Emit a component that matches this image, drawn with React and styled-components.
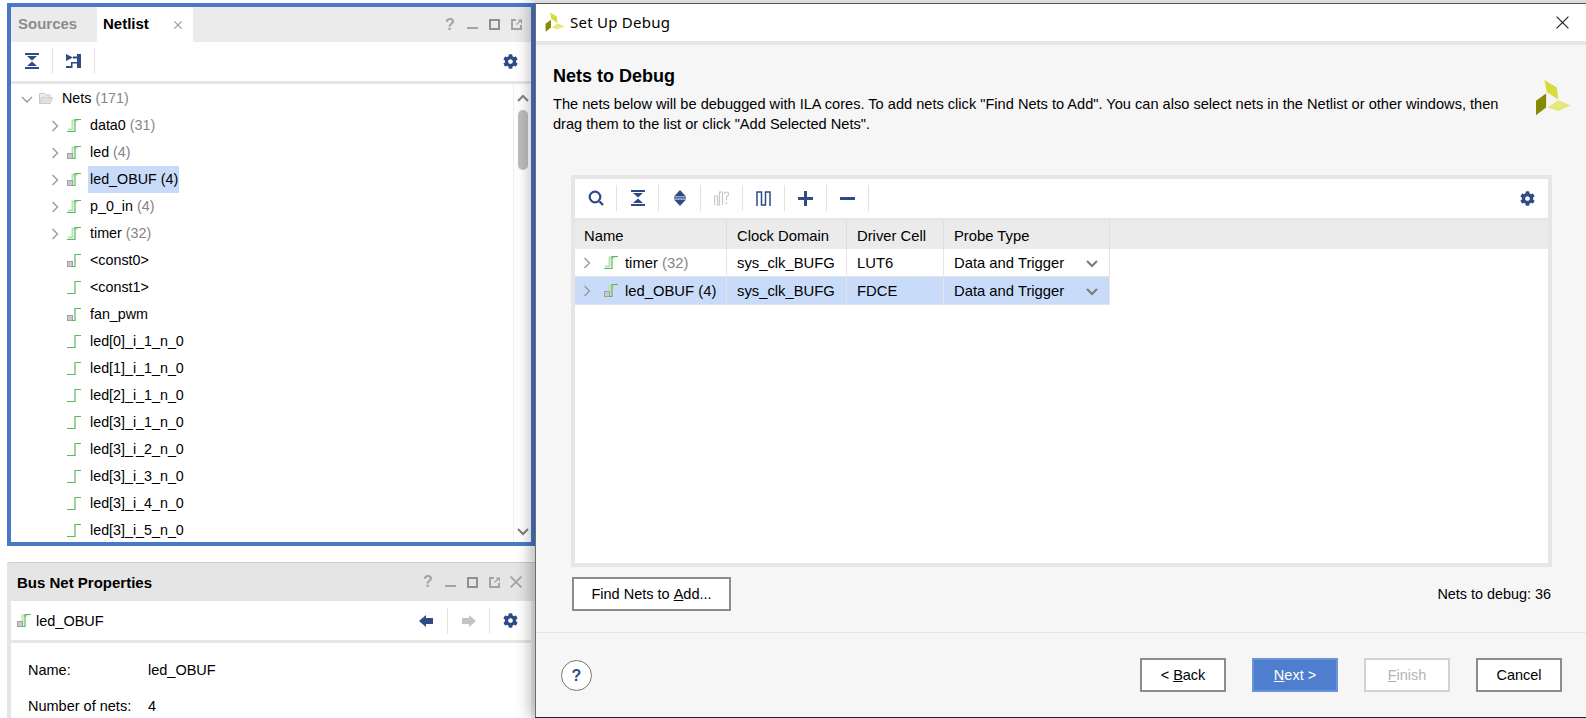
import React from 'react'
import styled, { createGlobalStyle } from 'styled-components'
import { FaCog } from 'react-icons/fa'

const GlobalStyle = createGlobalStyle`
  html, body {
    margin: 0;
    padding: 0;
    background: #fff;
  }
  * {
    box-sizing: border-box;
  }
`

const NAVY = '#2f4b85'
const BLUE = '#4a78c8'

const treeRows = [
  { name: 'data0', count: 31, kind: 'bus', open: true },
  { name: 'led', count: 4, kind: 'busBox', open: true },
  { name: 'led_OBUF', count: 4, kind: 'busBox', open: true, selected: true },
  { name: 'p_0_in', count: 4, kind: 'bus', open: true },
  { name: 'timer', count: 32, kind: 'bus', open: true },
  { name: '<const0>', kind: 'box' },
  { name: '<const1>', kind: 'single' },
  { name: 'fan_pwm', kind: 'box' },
  { name: 'led[0]_i_1_n_0', kind: 'single' },
  { name: 'led[1]_i_1_n_0', kind: 'single' },
  { name: 'led[2]_i_1_n_0', kind: 'single' },
  { name: 'led[3]_i_1_n_0', kind: 'single' },
  { name: 'led[3]_i_2_n_0', kind: 'single' },
  { name: 'led[3]_i_3_n_0', kind: 'single' },
  { name: 'led[3]_i_4_n_0', kind: 'single' },
  { name: 'led[3]_i_5_n_0', kind: 'single' },
]

const debugRows = [
  { name: 'timer', count: 32, kind: 'bus', domain: 'sys_clk_BUFG', cell: 'LUT6' },
  { name: 'led_OBUF', count: 4, kind: 'busBox', domain: 'sys_clk_BUFG', cell: 'FDCE', selected: true, dark: true },
]

const NetIcon = ({ kind }) => {
  const bus = kind === 'bus' || kind === 'busBox'
  const box = kind === 'box' || kind === 'busBox'
  return (
    <svg width="14" height="13" viewBox="0 0 14 13" fill="none">
      {bus && <path d="M1 10.5H5.5V1.5H11" stroke="#b9e2b9" strokeWidth="2" />}
      {box && <rect x="0.5" y="7.5" width="5" height="5" fill="#c9c9c9" stroke="#a0a0a0" />}
      <path d={box ? 'M5 12.5H8V0.5H14' : 'M0 12.5H8V0.5H14'} stroke="#5cb85c" strokeWidth="1.2" />
    </svg>
  )
}

const Chevron = ({ open, color = '#9a9a9a', weight = 1.4 }) => (
  <svg width="12" height="12" viewBox="0 0 12 12" fill="none">
    <path d={open ? 'M1 4L6 9L11 4' : 'M3.5 1L8.5 6L3.5 11'} stroke={color} strokeWidth={weight} />
  </svg>
)

const Folder = () => (
  <svg width="14" height="11" viewBox="0 0 14 11">
    <path d="M0.5 0.5H5.5L7 2H11V10.5H0.5Z" fill="#ececec" stroke="#c8c8c8" />
    <path d="M2.5 4.5H13.5L11 10.5H0.5Z" fill="#e0e0e0" stroke="#cccccc" />
  </svg>
)

const CollapseIcon = () => (
  <svg width="14" height="16" viewBox="0 0 14 16" fill={NAVY}>
    <rect width="14" height="2" />
    <path d="M2 3H12L7 7.4Z" />
    <path d="M7 8.6L12 13H2Z" />
    <rect y="14" width="14" height="2" />
  </svg>
)

const ExpandIcon = () => (
  <svg width="14" height="16" viewBox="0 0 14 16" fill={NAVY}>
    <path d="M7 0L13 6.5H1Z" />
    <rect x="1" y="7.2" width="12" height="1.4" />
    <path d="M1 9.5H13L7 16Z" />
  </svg>
)

const FlattenIcon = () => (
  <svg width="15" height="14" viewBox="0 0 15 14" fill={NAVY}>
    <path d="M0 0L7 3.5L0 7Z" />
    <rect x="7" y="2.5" width="4" height="2" />
    <rect x="11" width="4" height="14" />
    <path d="M0 12H5V8H11V9.5H6.5V14H0Z" />
  </svg>
)

const SearchIcon = () => (
  <svg width="16" height="16" viewBox="0 0 16 16" fill="none" stroke={NAVY}>
    <circle cx="7" cy="7" r="5.3" strokeWidth="2.2" />
    <path d="M11.5 11.5L15 15" strokeWidth="2.4" />
  </svg>
)

const SchematicIcon = () => (
  <svg width="15" height="15" viewBox="0 0 15 15" fill="none" stroke="#c6c6c6" strokeWidth="1.2">
    <path d="M0.5 14V5H3.5V14H5.5V1H8.5V14" />
    <path d="M10.5 3Q10.5 1 12.5 1T14.5 3T12.5 6V9M12.5 11V13" />
  </svg>
)

const WaveIcon = () => (
  <svg width="15" height="15" viewBox="0 0 15 15" fill="none" stroke={NAVY} strokeWidth="1.5">
    <path d="M1 15V1H5.5V14H9.5V1H14V15" />
  </svg>
)

const PlusIcon = () => (
  <svg width="15" height="15" viewBox="0 0 15 15" fill={NAVY}>
    <rect y="6" width="15" height="3" />
    <rect x="6" width="3" height="15" />
  </svg>
)

const MinusIcon = () => (
  <svg width="15" height="15" viewBox="0 0 15 15" fill={NAVY}>
    <rect y="6" width="15" height="3" />
  </svg>
)

const ArrowIcon = ({ right, color }) => (
  <svg width="14" height="12" viewBox="0 0 14 12" fill={color}>
    <path d={right ? 'M0 3H7V0L14 6L7 12V9H0Z' : 'M14 3H7V0L0 6L7 12V9H14Z'} />
  </svg>
)

const MinimizeIcon = () => (
  <svg width="11" height="11" viewBox="0 0 11 11" fill="#a3a3a3">
    <rect y="8" width="11" height="2" />
  </svg>
)

const MaximizeIcon = () => (
  <svg width="11" height="11" viewBox="0 0 11 11" fill="none" stroke="#8f8f8f" strokeWidth="2">
    <rect x="1" y="1" width="9" height="9" />
  </svg>
)

const FloatIcon = () => (
  <svg width="11" height="11" viewBox="0 0 11 11" fill="none" stroke="#a3a3a3">
    <path d="M5 1H1V10H10V6" strokeWidth="2" />
    <path d="M5.5 5.5L10 1M7 1H10.5V4.5" strokeWidth="1.2" />
  </svg>
)

const CloseIcon = ({ size = 12, color = '#a3a3a3', weight = 1.6 }) => (
  <svg width={size} height={size} viewBox="0 0 11 11" fill="none" stroke={color} strokeWidth={weight}>
    <path d="M0.5 0.5L10.5 10.5M10.5 0.5L0.5 10.5" />
  </svg>
)

const Logo = ({ size }) => (
  <svg width={size} height={size} viewBox="285 237 110 110">
    <path d="M313 240L350 262L354 298L320 276Z" fill="#d5dc3c" />
    <path d="M354 300L392 316L355 332L322 322Z" fill="#e3e97c" />
    <path d="M318 280V322L288 345V302Z" fill="#858a00" />
  </svg>
)

const WindowButtons = ({ closable }) => (
  <WindowControls>
    <HelpMark>?</HelpMark>
    <WindowButton><MinimizeIcon /></WindowButton>
    <WindowButton><MaximizeIcon /></WindowButton>
    <WindowButton><FloatIcon /></WindowButton>
    {closable && <WindowButton><CloseIcon /></WindowButton>}
  </WindowControls>
)

const App = () => {
  return (
    <Desktop>
      <GlobalStyle />
      <LeftColumn>
        <NetlistPanel>
          <TabBar>
            <Tab>Sources</Tab>
            <Tab $active>
              Netlist
              <TabClose><CloseIcon size={8} color="#9a9a9a" weight={1.5} /></TabClose>
            </Tab>
            <TabFill><WindowButtons /></TabFill>
          </TabBar>
          <Toolbar>
            <ToolButton><CollapseIcon /></ToolButton>
            <ToolButton><FlattenIcon /></ToolButton>
            <ToolSpacer />
            <GearSlot><FaCog size={15} color={NAVY} /></GearSlot>
          </Toolbar>
          <TreeArea>
            <TreeList>
              <TreeRow>
                <ChevronSlot><Chevron open /></ChevronSlot>
                <FolderSlot><Folder /></FolderSlot>
                <NetName>Nets <Count>(171)</Count></NetName>
              </TreeRow>
              {treeRows.map((row) => (
                <TreeRow key={row.name} $child>
                  <ChevronSlot>{row.open && <Chevron />}</ChevronSlot>
                  <IconSlot><NetIcon kind={row.kind} /></IconSlot>
                  <NetName $selected={row.selected}>
                    {row.name}
                    {row.count && ' '}
                    {row.count && <Count $dark={row.selected}>({row.count})</Count>}
                  </NetName>
                </TreeRow>
              ))}
            </TreeList>
            <ScrollBar>
              <ScrollArrow><Chevron open color="#808080" weight={2} /></ScrollArrow>
              <ScrollThumb />
              <ScrollGap />
              <ScrollArrow $down><Chevron open color="#808080" weight={2} /></ScrollArrow>
            </ScrollBar>
          </TreeArea>
        </NetlistPanel>
        <PropertiesPanel>
          <PropertiesTitle>
            Bus Net Properties
            <WindowButtons closable />
          </PropertiesTitle>
          <PropertiesBar>
            <NetIcon kind="busBox" />
            <PropertiesNet>led_OBUF</PropertiesNet>
            <ToolSpacer />
            <ArrowButton><ArrowIcon color={NAVY} /></ArrowButton>
            <ArrowButton $divided><ArrowIcon right color="#c4c4c4" /></ArrowButton>
            <ArrowButton $divided><FaCog size={15} color={NAVY} /></ArrowButton>
          </PropertiesBar>
          <PropertiesBody>
            <PropertyRow><span>Name:</span><span>led_OBUF</span></PropertyRow>
            <PropertyRow><span>Number of nets:</span><span>4</span></PropertyRow>
          </PropertiesBody>
        </PropertiesPanel>
      </LeftColumn>

      <DialogColumn>
        <Dialog>
          <TitleBar>
            <Logo size={20} />
            <DialogTitle>Set Up Debug</DialogTitle>
            <DialogClose><CloseIcon size={13} color="#222" weight={1} /></DialogClose>
          </TitleBar>
          <DialogHeader>
            <div>
              <Heading>Nets to Debug</Heading>
              <Description>
                The nets below will be debugged with ILA cores. To add nets click "Find Nets to Add". You can also select nets in the Netlist or other windows, then<br />
                drag them to the list or click "Add Selected Nets".
              </Description>
            </div>
            <HeaderLogo><Logo size={37} /></HeaderLogo>
          </DialogHeader>

          <TablePanel>
            <Toolbar>
              <ToolButton><SearchIcon /></ToolButton>
              <ToolButton><CollapseIcon /></ToolButton>
              <ToolButton><ExpandIcon /></ToolButton>
              <ToolButton><SchematicIcon /></ToolButton>
              <ToolButton><WaveIcon /></ToolButton>
              <ToolButton><PlusIcon /></ToolButton>
              <ToolButton><MinusIcon /></ToolButton>
              <ToolSpacer />
              <GearSlot><FaCog size={15} color={NAVY} /></GearSlot>
            </Toolbar>
            <TableHead>
              <HeadCell>Name</HeadCell>
              <HeadCell>Clock Domain</HeadCell>
              <HeadCell>Driver Cell</HeadCell>
              <HeadCell>Probe Type</HeadCell>
            </TableHead>
            {debugRows.map((row) => (
              <TableRow key={row.name} $selected={row.selected}>
                <NameCell>
                  <TableChevron><Chevron /></TableChevron>
                  <NetIcon kind={row.kind} />
                  <NetLabel>
                    {row.name} <Count $dark={row.dark}>({row.count})</Count>
                  </NetLabel>
                </NameCell>
                <Cell>{row.domain}</Cell>
                <Cell>{row.cell}</Cell>
                <ProbeCell>
                  Data and Trigger
                  <Chevron open color="#7d7d7d" weight={2.2} />
                </ProbeCell>
              </TableRow>
            ))}
          </TablePanel>

          <FindRow>
            <DialogButton $wide>Find Nets to <u>A</u>dd...</DialogButton>
            <NetCount>Nets to debug: 36</NetCount>
          </FindRow>

          <Footer>
            <HelpButton>?</HelpButton>
            <ToolSpacer />
            <DialogButton>&lt; <u>B</u>ack</DialogButton>
            <DialogButton $primary><u>N</u>ext &gt;</DialogButton>
            <DialogButton $disabled><u>F</u>inish</DialogButton>
            <DialogButton>Cancel</DialogButton>
          </Footer>
        </Dialog>
      </DialogColumn>
    </Desktop>
  )
}

const Desktop = styled.div`
  display: flex;
  width: 1586px;
  height: 718px;
  overflow: hidden;
  background: #fff;
  color: #000;
  font-family: 'Liberation Sans', Arial, sans-serif;
  font-size: 14.5px;
`
const LeftColumn = styled.div`
  display: flex;
  flex-direction: column;
  width: 535px;
  flex: none;
  padding: 3px 0 0 7px;
`
const NetlistPanel = styled.section`
  display: flex;
  flex-direction: column;
  height: 543px;
  flex: none;
  border: 4px solid ${BLUE};
`
const TabBar = styled.div`
  display: flex;
  height: 35px;
  flex: none;
  background: #ebebeb;
`
const Tab = styled.div`
  display: flex;
  align-items: center;
  width: ${(p) => (p.$active ? '96px' : '85px')};
  margin-left: ${(p) => (p.$active ? '1px' : '0')};
  padding-left: ${(p) => (p.$active ? '6px' : '7px')};
  padding-bottom: 3px;
  background: ${(p) => (p.$active ? '#fff' : '#ebebeb')};
  color: ${(p) => (p.$active ? '#000' : '#8c8c8c')};
  font-size: 15px;
  font-weight: bold;
`
const TabClose = styled.span`
  display: flex;
  margin-left: 25px;
  margin-top: 4px;
`
const TabFill = styled.div`
  display: flex;
  flex: 1;
  justify-content: flex-end;
  align-items: center;
  padding-right: 4px;
`
const WindowControls = styled.div`
  display: flex;
  align-items: center;
  margin-left: auto;
`
const WindowButton = styled.span`
  display: flex;
  justify-content: center;
  align-items: center;
  width: 22px;
`
const HelpMark = styled(WindowButton)`
  color: #a3a3a3;
  font-size: 16px;
  font-weight: bold;
`
const Toolbar = styled.div`
  display: flex;
  align-items: center;
  height: 42px;
  flex: none;
  padding-bottom: 1px;
  background: #fff;
  border-bottom: 3px solid #e6e6e6;
`
const ToolButton = styled.div`
  display: flex;
  justify-content: center;
  align-items: center;
  width: 42px;
  height: 26px;
  border-right: 1px solid #e2e2e2;
`
const ToolSpacer = styled.div`
  flex: 1;
`
const GearSlot = styled.div`
  display: flex;
  justify-content: center;
  width: 42px;
`
const TreeArea = styled.div`
  display: flex;
  flex: 1;
  min-height: 0;
  background: #fff;
`
const TreeList = styled.div`
  flex: 1;
  padding-top: 1px;
  overflow: hidden;
  font-size: 14.3px;
`
const TreeRow = styled.div`
  display: flex;
  align-items: center;
  height: 27px;
  padding-left: ${(p) => (p.$child ? '38px' : '10px')};
`
const ChevronSlot = styled.span`
  display: flex;
  width: 18px;
  flex: none;
`
const FolderSlot = styled.span`
  display: flex;
  width: 22px;
  flex: none;
`
const IconSlot = styled.span`
  display: flex;
  width: 22px;
  flex: none;
`
const NetName = styled.span`
  height: 27px;
  padding: 0 1px 0 ${(p) => (p.$selected ? '2px' : '1px')};
  margin-left: ${(p) => (p.$selected ? '-1px' : '0')};
  line-height: 27px;
  white-space: pre;
  background: ${(p) => (p.$selected ? '#c8dcfa' : 'transparent')};
`
const Count = styled.span`
  color: ${(p) => (p.$dark ? '#000' : '#858585')};
`
const ScrollBar = styled.div`
  display: flex;
  flex-direction: column;
  align-items: center;
  width: 18px;
  flex: none;
  border-left: 1px solid #eee;
`
const ScrollArrow = styled.div`
  display: flex;
  height: 15px;
  margin-top: ${(p) => (p.$down ? '0' : '6px')};
  margin-bottom: ${(p) => (p.$down ? '2px' : '0')};
  transform: ${(p) => (p.$down ? 'none' : 'rotate(180deg)')};
`
const ScrollThumb = styled.div`
  width: 10px;
  height: 60px;
  margin-top: 5px;
  border-radius: 5px;
  background: #bdbdbd;
`
const ScrollGap = styled.div`
  flex: 1;
`
const PropertiesPanel = styled.section`
  display: flex;
  flex-direction: column;
  flex: 1;
  margin-top: 16px;
  border-top: 1px solid #ccc;
  border-left: 4px solid #e5e5e5;
  background: #f2f2f2;
`
const PropertiesTitle = styled.div`
  display: flex;
  align-items: center;
  height: 38px;
  flex: none;
  padding: 0 8px 0 6px;
  background: #e5e5e5;
  font-size: 15px;
  font-weight: bold;
`
const PropertiesBar = styled.div`
  display: flex;
  align-items: center;
  height: 42px;
  flex: none;
  padding-left: 6px;
  margin-right: 4px;
  background: #fff;
  border-bottom: 3px solid #e6e6e6;
`
const PropertiesNet = styled.span`
  margin-left: 5px;
`
const ArrowButton = styled.div`
  display: flex;
  justify-content: center;
  align-items: center;
  width: 42px;
  height: 26px;
  border-left: ${(p) => (p.$divided ? '1px solid #e2e2e2' : 'none')};
`
const PropertiesBody = styled.div`
  flex: 1;
  margin-right: 4px;
  padding: 10px 17px;
  background: #fff;
`
const PropertyRow = styled.div`
  display: grid;
  grid-template-columns: 120px 1fr;
  height: 35.5px;
  line-height: 35.5px;
`
const DialogColumn = styled.div`
  position: relative;
  display: flex;
  flex: 1;
  padding-top: 3px;
  background: #dcdcdc;
  border-bottom: 1px solid #222;
  box-shadow: -5px 0 14px rgba(0, 0, 0, 0.28);
`
const Dialog = styled.div`
  display: flex;
  flex-direction: column;
  flex: 1;
  min-width: 0;
  background: #f6f6f6;
  border-top: 1px solid #555;
  border-left: 1px solid #6e6e6e;
`
const TitleBar = styled.div`
  display: flex;
  align-items: center;
  height: 41px;
  flex: none;
  padding-left: 9px;
  padding-bottom: 1px;
  background: #fff;
  border-bottom: 4px solid #e6e6e6;
`
const DialogTitle = styled.div`
  margin-left: 5px;
  font-family: 'Noto Sans', sans-serif;
  font-size: 15px;
  letter-spacing: 0.25px;
`
const DialogClose = styled.div`
  display: flex;
  margin-left: auto;
  margin-right: 17px;
`
const DialogHeader = styled.header`
  display: flex;
  height: 130px;
  flex: none;
  padding: 21px 0 0 17px;
`
const Heading = styled.h1`
  margin: 0 0 8px;
  font-size: 18px;
  line-height: 20px;
  font-weight: bold;
`
const Description = styled.p`
  margin: 0;
  font-size: 14.6px;
  line-height: 20px;
  white-space: nowrap;
`
const HeaderLogo = styled.div`
  margin: 13px 0 0 auto;
  padding-right: 14px;
`
const TablePanel = styled.div`
  display: flex;
  flex-direction: column;
  height: 392px;
  flex: none;
  margin: 0 34px 0 35px;
  background: #fff;
  border: 4px solid #e6e6e6;
  font-size: 14.8px;
`
const TableGrid = styled.div`
  display: grid;
  grid-template-columns: 152px 120px 97px 166px;
`
const TableHead = styled(TableGrid)`
  height: 28px;
  flex: none;
  background: #ebebeb;
`
const HeadCell = styled.div`
  padding: 1px 0 0 10px;
  line-height: 28px;
  border-right: 1px solid #dedede;
  &:first-child {
    padding-left: 9px;
  }
`
const TableRow = styled(TableGrid)`
  width: 535px;
  height: 28px;
  flex: none;
  background: ${(p) => (p.$selected ? '#c8dcfa' : '#fff')};
  border-bottom: 1px solid #e4e4e4;
`
const Cell = styled.div`
  display: flex;
  align-items: center;
  padding-left: 10px;
  border-right: 1px solid #e4e4e4;
`
const NameCell = styled(Cell)`
  gap: 7px;
  padding-left: 6px;
`
const TableChevron = styled.span`
  display: flex;
  width: 23px;
  margin-right: -7px;
  flex: none;
`
const NetLabel = styled.span`
  white-space: pre;
`
const ProbeCell = styled(Cell)`
  justify-content: space-between;
  padding-right: 11px;
`
const FindRow = styled.div`
  display: flex;
  justify-content: space-between;
  align-items: center;
  height: 66px;
  flex: none;
  padding: 10px 35px 22px 36px;
  border-bottom: 1px solid #e6e6e6;
`
const NetCount = styled.span`
  font-size: 14.4px;
`
const Footer = styled.footer`
  display: flex;
  align-items: center;
  gap: 26px;
  flex: 1;
  padding: 0 24px 0 25px;
`
const HelpButton = styled.div`
  width: 31px;
  height: 31px;
  border: 1px solid #777;
  border-radius: 50%;
  background: #fff;
  color: ${NAVY};
  font-size: 16px;
  font-weight: bold;
  line-height: 29px;
  text-align: center;
`
const DialogButton = styled.div`
  display: flex;
  justify-content: center;
  align-items: center;
  width: ${(p) => (p.$wide ? '159px' : '86px')};
  height: 34px;
  border: 2px solid ${(p) => (p.$primary ? '#6a93d8' : p.$disabled ? '#d2d2d2' : '#8c8c8c')};
  background: ${(p) => (p.$primary ? '#4f7ecf' : '#fff')};
  color: ${(p) => (p.$primary ? '#fff' : p.$disabled ? '#b4b4b4' : '#000')};
  white-space: pre;
`

export default App
